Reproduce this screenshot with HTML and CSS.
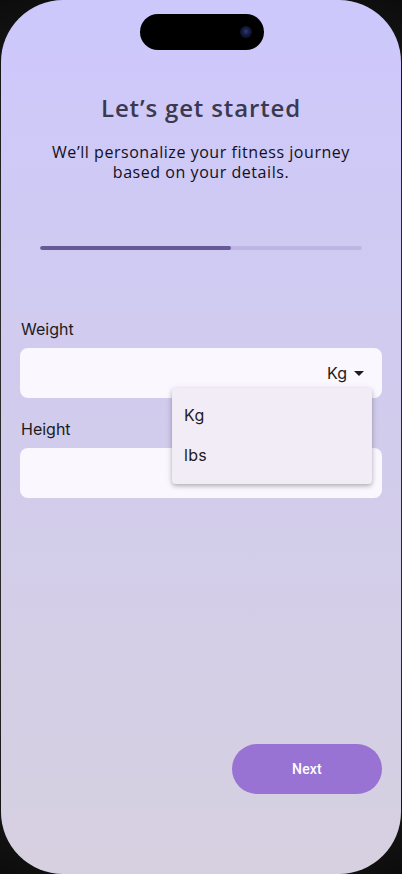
FILE: index.html
```html
<!DOCTYPE html>
<html lang="en">
<head>
<meta charset="utf-8">
<title>Let's get started</title>
<link rel="stylesheet" href="styles.css">
</head>
<body>
<div class="device">
  <div class="screen">
    <div class="island"><span class="camera"></span></div>
    <header class="intro">
      <h1 class="title">Let’s get started</h1>
      <p class="subtitle">We’ll personalize your fitness journey<br>based on your details.</p>
    </header>
    <div class="progress"><div class="progress-fill" style="width:59.3%"></div></div>
    <form class="form">
      <div class="field">
        <label class="label">Weight</label>
        <div class="input">
          <span class="unit">Kg
            <svg class="caret" width="10" height="5" viewBox="0 0 10 5"><path d="M0 0h10L5 5z" fill="#1d1b20"/></svg>
          </span>
          <ul class="menu">
            <li class="menu-item">Kg</li>
            <li class="menu-item">lbs</li>
          </ul>
        </div>
      </div>
      <div class="field">
        <label class="label">Height</label>
        <div class="input"></div>
      </div>
    </form>
    <div class="actions">
      <button class="next" type="button">Next</button>
    </div>
  </div>
</div>
</body>
</html>
```

FILE: styles.css
```css
* { box-sizing: border-box; }
html, body { margin: 0; padding: 0; }
body {
  width: 402px;
  height: 874px;
  background: #141414;
  overflow: hidden;
}
.device {
  width: 402px;
  height: 874px;
  padding: 0 1px;
  background: radial-gradient(circle at 50% 50%, #2a2a2a 60%, #0c0c0c 100%);
}
.screen {
  position: relative;
  width: 100%;
  height: 100%;
  border-radius: 62px;
  overflow: hidden;
  background: linear-gradient(180deg, #cdc8fc 0%, #d0cbf0 35%, #d6d0e0 100%);
  display: flex;
  flex-direction: column;
  padding: 14px 19px 0;
}
.island {
  align-self: center;
  width: 124px;
  height: 36px;
  margin-left: 1px;
  border-radius: 18px;
  background: #000;
  display: flex;
  justify-content: flex-end;
  align-items: center;
  padding-right: 12px;
}
.camera {
  width: 12px;
  height: 12px;
  border-radius: 50%;
  background: radial-gradient(circle at 50% 45%, #2c3a7a 0%, #15183a 45%, #0a0a14 100%);
}
.intro {
  text-align: center;
  margin-top: 43px;
}
.title {
  margin: 0;
  font-family: "Open Sans", "Lato", sans-serif;
  font-weight: 600;
  font-size: 24px;
  line-height: 30px;
  color: #3b3950;
  letter-spacing: 0.85px;
}
.subtitle {
  margin: 19px 0 0;
  font-family: "Open Sans", "Lato", sans-serif;
  font-weight: 500;
  font-size: 16px;
  line-height: 20px;
  color: #121020;
  letter-spacing: 0.55px;
}
.progress {
  margin: 64px 20px 0 20px;
  height: 4px;
  border-radius: 2px;
  background: #bdb6e2;
  overflow: hidden;
}
.progress-fill {
  height: 100%;
  border-radius: 2px;
  background: #675898;
}
.form {
  margin-top: 68px;
  display: flex;
  flex-direction: column;
  gap: 20px;
}
.field {
  display: flex;
  flex-direction: column;
  gap: 8px;
}
.label {
  font-family: "Inter", "Roboto", sans-serif;
  font-size: 16px;
  line-height: 22px;
  color: #1d1b20;
  padding-left: 1px;
}
.input {
  position: relative;
  height: 50px;
  border-radius: 8px;
  background: #faf7fe;
  display: flex;
  align-items: center;
  justify-content: flex-end;
  padding-right: 18px;
}
.unit {
  display: flex;
  align-items: center;
  gap: 7px;
  font-family: "Inter", "Roboto", sans-serif;
  font-size: 16px;
  color: #1d1b20;
}
.menu {
  position: absolute;
  z-index: 2;
  top: 40px;
  right: 10px;
  width: 200px;
  margin: 0;
  padding: 7px 0 9px;
  list-style: none;
  background: #f2ecf6;
  border-radius: 4px;
  box-shadow: 0 2px 4px rgba(0,0,0,0.25), 0 1px 8px rgba(0,0,0,0.08);
}
.menu-item {
  height: 40px;
  display: flex;
  align-items: center;
  padding-left: 12px;
  font-family: "Inter", "Roboto", sans-serif;
  font-size: 16px;
  color: #1d1b20;
  letter-spacing: 0.3px;
}
.actions {
  margin-top: auto;
  margin-bottom: 80px;
  display: flex;
  justify-content: flex-end;
}
.next {
  width: 150px;
  height: 50px;
  border: none;
  border-radius: 25px;
  background: #9873d4;
  color: #fff;
  font-family: "Roboto", sans-serif;
  font-weight: 500;
  font-size: 14px;
  letter-spacing: 0.2px;
}
```
